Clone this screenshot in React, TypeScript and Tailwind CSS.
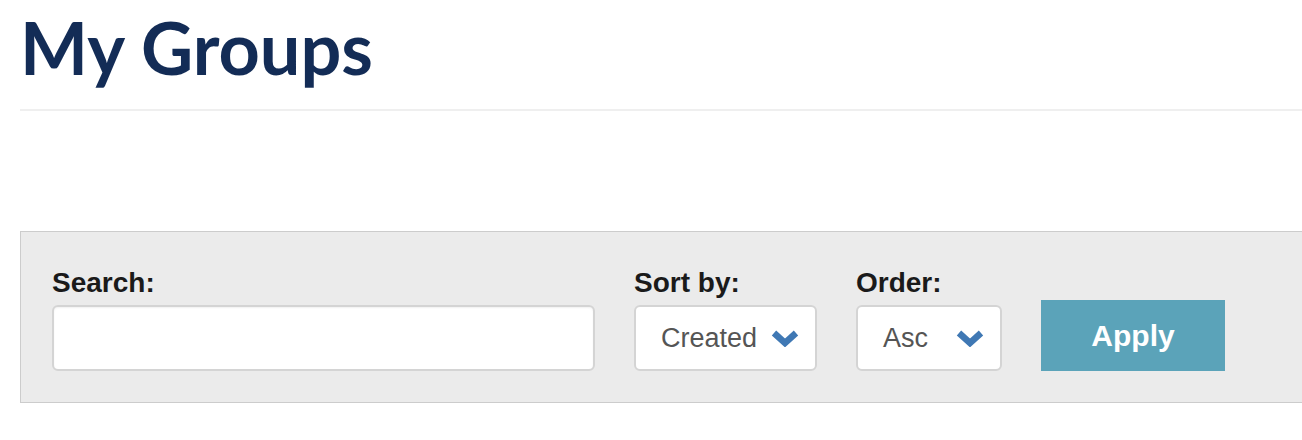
const Chevron = () => (
  <svg width="28" height="18" viewBox="0 0 28 18" className="shrink-0">
    <polyline
      points="3,4 14,14 25,4"
      fill="none"
      stroke="#3f78b4"
      strokeWidth="6.5"
      strokeLinejoin="miter"
    />
  </svg>
);

const SelectBox = ({ value, width }: { value: string; width: string }) => (
  <div
    className={`${width} h-[66px] flex items-center justify-between pl-[25px] pr-[16px] bg-white border-2 border-[#d4d4d4] rounded-[6px] text-[27px] text-[#555]`}
  >
    <span>{value}</span>
    <Chevron />
  </div>
);

export default function App() {
  return (
    <div className="bg-white min-h-[440px] pl-5 font-['Liberation_Sans',Arial,sans-serif]">
      <h1 className="pt-[11px] text-[72px] leading-none font-bold text-[#132c56] font-['Lato',sans-serif]">
        My Groups
      </h1>
      <div className="mt-[26px] border-t-2 border-[#efefef]" />

      <div className="mt-[120px] bg-[#ebebeb] border-y border-l border-[#cccccc] pl-[31px] pt-[36px] pb-[31px]">
        <div className="flex items-end gap-[39px]">
          <div className="flex flex-col">
            <label className="text-[28px] leading-[30px] font-bold text-[#1a1a1a] mb-[7px]">Search:</label>
            <input
              type="text"
              className="w-[543px] h-[66px] bg-white border-2 border-[#d4d4d4] rounded-[6px] shadow-[inset_0_1px_2px_rgba(0,0,0,0.06)] outline-none px-3 text-[26px]"
            />
          </div>
          <div className="flex flex-col">
            <label className="text-[28px] leading-[30px] font-bold text-[#1a1a1a] mb-[7px]">Sort by:</label>
            <SelectBox value="Created" width="w-[183px]" />
          </div>
          <div className="flex flex-col">
            <label className="text-[28px] leading-[30px] font-bold text-[#1a1a1a] mb-[7px]">Order:</label>
            <SelectBox value="Asc" width="w-[146px]" />
          </div>
          <button className="w-[184px] h-[71px] bg-[#5ba3b9] text-white text-[30px] font-bold">
            Apply
          </button>
        </div>
      </div>
    </div>
  );
}
